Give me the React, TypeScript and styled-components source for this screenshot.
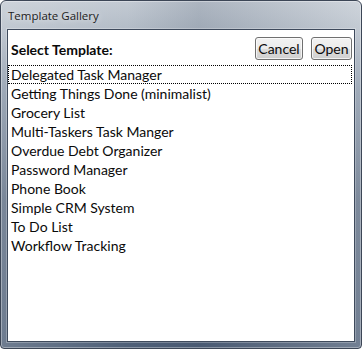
import styled, { createGlobalStyle } from "styled-components";

const GlobalStyle = createGlobalStyle`
  html, body {
    margin: 0;
    padding: 0;
    background: #ffffff;
  }
`;

const templates = [
  "Delegated Task Manager",
  "Getting Things Done (minimalist)",
  "Grocery List",
  "Multi-Taskers Task Manger",
  "Overdue Debt Organizer",
  "Password Manager",
  "Phone Book",
  "Simple CRM System",
  "To Do List",
  "Workflow Tracking",
];

const Window = styled.div`
  width: 362px;
  height: 349px;
  box-sizing: border-box;
  border: 1px solid #3c4656;
  border-radius: 6px 6px 4px 4px;
  background:
    linear-gradient(90deg, rgba(255, 255, 255, 0.18) 0%, rgba(255, 255, 255, 0) 35%, rgba(40, 55, 80, 0.14) 55%, rgba(255, 255, 255, 0.2) 100%),
    linear-gradient(180deg, #c3cad3 0px, #b3bcc7 28px, #8896a8 90px, #5d6d83 200px, #4f6078 340px);
  box-shadow: inset 0 0 0 1px rgba(255, 255, 255, 0.35);
  display: flex;
  flex-direction: column;
  overflow: hidden;
`;

const TitleBar = styled.div`
  height: 28px;
  display: flex;
  align-items: center;
  padding-left: 7px;
  font-family: "Open Sans", "Noto Sans", sans-serif;
  font-size: 11.5px;
  color: #1c1c1c;
  text-shadow: 0 0 6px rgba(255, 255, 255, 0.8);
`;

const Client = styled.div`
  flex: 1;
  margin: 0 6px 6px 6px;
  border: 1px solid #3e4a5c;
  box-shadow: 0 0 0 1px rgba(255, 255, 255, 0.25);
  background: #ffffff;
  display: flex;
  flex-direction: column;
  font-family: Lato, "Noto Sans", sans-serif;
  font-size: 14px;
  color: #0a0a0a;
`;

const Header = styled.div`
  height: 35px;
  display: flex;
  align-items: center;
  padding: 0 2px 0 3px;
  gap: 8px;
`;

const Label = styled.div`
  flex: 1;
  font-weight: bold;
  padding-top: 3px;
`;

const Button = styled.button<{ $w: number }>`
  width: ${(p) => p.$w}px;
  height: 23px;
  margin-top: 2px;
  box-sizing: border-box;
  border: 1px solid #707070;
  border-radius: 3px;
  background: linear-gradient(180deg, #f2f2f2 0%, #ebebeb 50%, #dddddd 51%, #cfcfcf 100%);
  box-shadow: inset 0 0 0 1px rgba(255, 255, 255, 0.7);
  font-family: inherit;
  font-size: 14px;
  color: #0a0a0a;
  padding: 0;
  line-height: 19px;
`;

const List = styled.div`
  display: flex;
  flex-direction: column;
  margin-right: 2px;
`;

const Row = styled.div<{ $focus?: boolean }>`
  height: 19px;
  box-sizing: border-box;
  line-height: 18px;
  padding-left: 2px;
  border: 1px dotted ${(p) => (p.$focus ? "#000000" : "transparent")};
  white-space: nowrap;
`;

export default function App() {
  return (
    <>
      <GlobalStyle />
      <Window>
        <TitleBar>Template Gallery</TitleBar>
        <Client>
          <Header>
            <Label>Select Template:</Label>
            <Button $w={48}>Cancel</Button>
            <Button $w={41}>Open</Button>
          </Header>
          <List>
            {templates.map((t, i) => (
              <Row key={t} $focus={i === 0}>
                {t}
              </Row>
            ))}
          </List>
        </Client>
      </Window>
    </>
  );
}
